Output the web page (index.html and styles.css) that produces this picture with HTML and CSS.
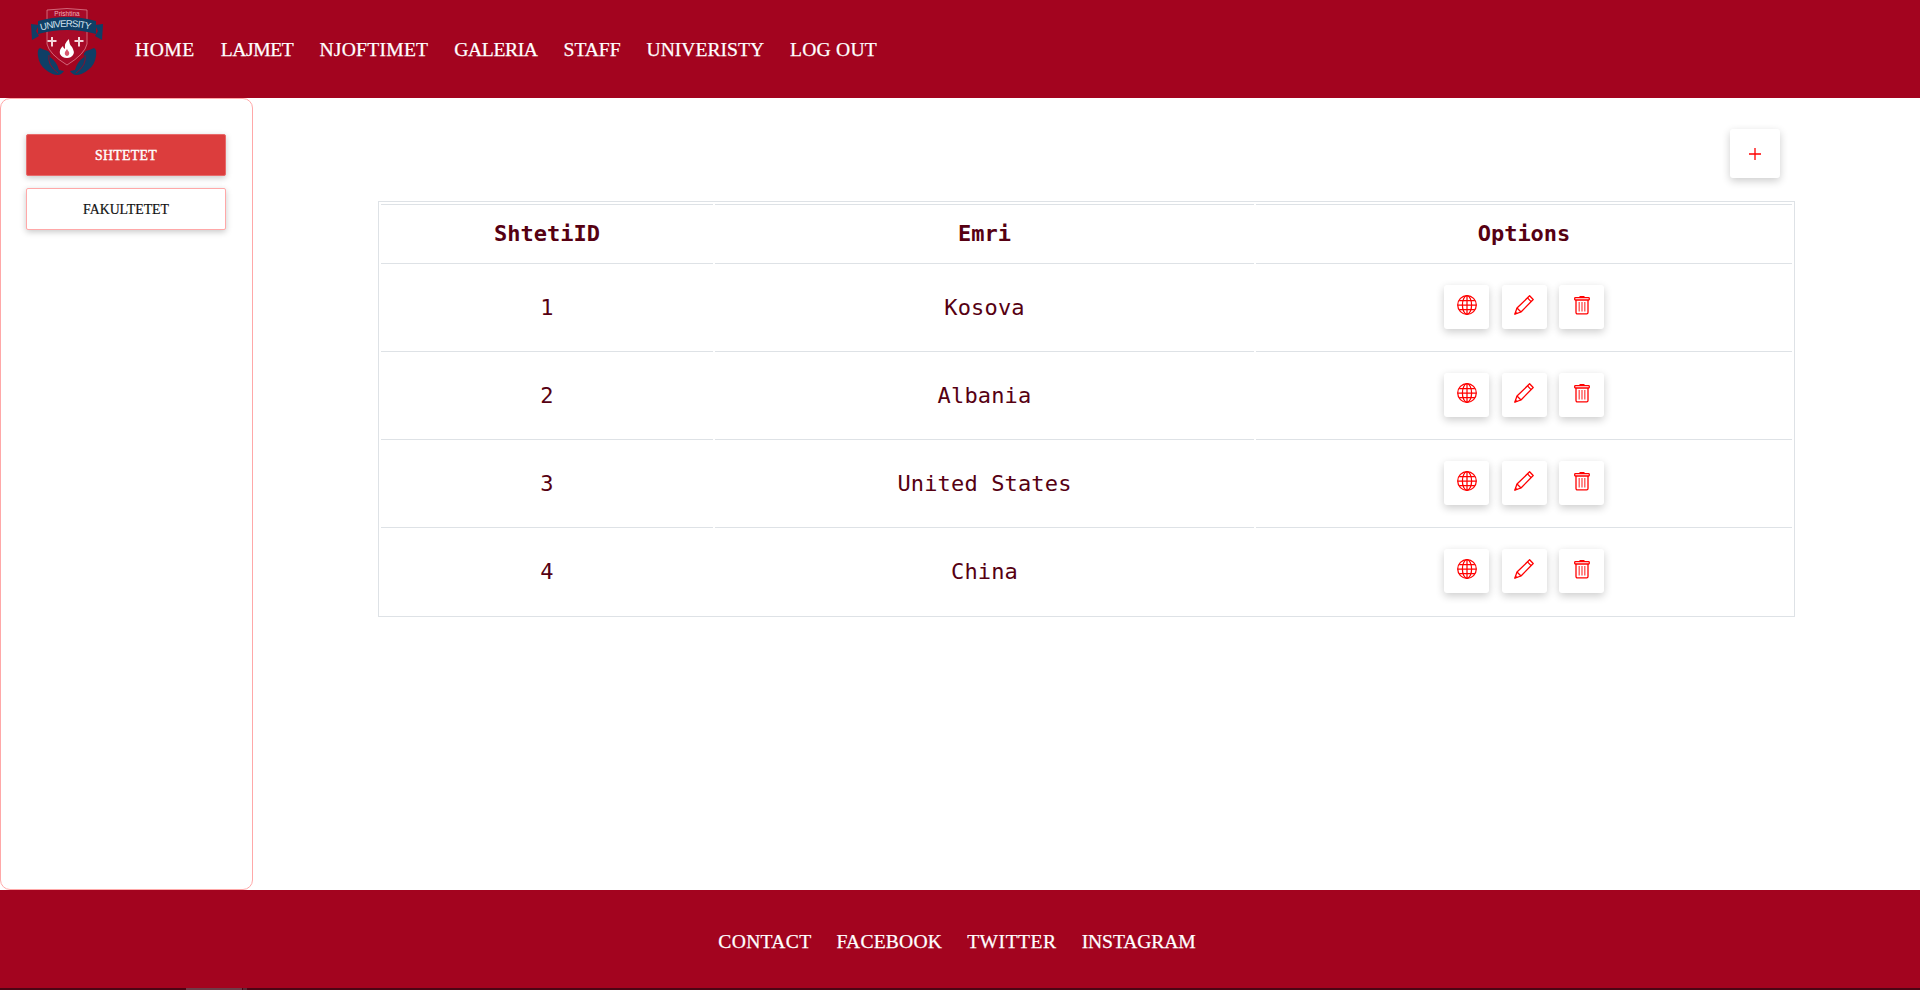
FILE: index.html
```html
<!DOCTYPE html>
<html lang="sq">
<head>
<meta charset="utf-8">
<title>University</title>
<link rel="stylesheet" href="styles.css">
</head>
<body>
<svg class="sprite" width="0" height="0" aria-hidden="true">
  <symbol id="i-globe" viewBox="0 0 20 20">
    <g fill="none" stroke="currentColor" stroke-width="1.250">
      <circle cx="10" cy="10" r="9.300"/>
      <ellipse cx="10" cy="10" rx="4.600" ry="9.300"/>
      <path d="M10 .7v18.600M.7 10h18.600M2.200 5.500h15.600M2.200 14.500h15.600"/>
    </g>
  </symbol>
  <symbol id="i-pencil" viewBox="0 0 20 20">
    <g fill="none" stroke="currentColor" stroke-width="1.300" stroke-linejoin="round">
      <path d="M.8 19.200 3 13 15.600.8l3.600 3.700L7 17z"/>
      <path d="M3 13l4 4M13.500 2.900l3.600 3.700"/>
    </g>
    <path d="M.5 19.500l.9-3.300 2.400 2.300z" fill="currentColor"/>
  </symbol>
  <symbol id="i-trash" viewBox="0 0 16 20">
    <g fill="none" stroke="currentColor" stroke-width="1.300">
      <rect x=".7" y="2.600" width="14.600" height="2.400" rx=".8"/>
      <path d="M2 5v12.500A1.300 1.300 0 0 0 3.300 18.800h9.400a1.300 1.300 0 0 0 1.300-1.300V5"/>
      <path d="M5.200 7v9.500M8 7v9.500M10.800 7v9.500" stroke-opacity=".7"/>
    </g>
    <rect x="5.500" y="1" width="5" height="1.500" fill="currentColor"/>
  </symbol>
</svg>

<header class="topbar">
  <svg class="logo" viewBox="0 0 74 68" role="img" aria-label="Prishtina University">
    <defs><path id="logo-arc" d="M11 22.500Q37 15 64 22.500"/></defs>
    <path class="logo-shield" d="M17 2q20-3 40 0v34q-2 10-20 21-18-11-20-21z"/>
    <path class="logo-wing" d="M9 17 1 16l1 16 7-4-3-5z M65 17l8-1-1 16-7-4 3-5z"/>
    <path class="logo-ribbon" d="M8 13Q37 5 66 13V26Q37 18 8 26z"/>
    <text class="logo-top" x="37" y="7.600" text-anchor="middle">Prishtina</text>
    <text class="logo-name"><textPath href="#logo-arc" textLength="50">UNIVERSITY</textPath></text>
    <path class="logo-white" d="M39 31q0 5 3 8 3 5 1 8-2 3-6 3-5 0-7-4-1-5 3-8 0 2 2 3-1-6 4-10z"/>
    <path class="logo-flame" d="M37 41q1 2 2 3 1 3-2 4-3-1-2-4z"/>
    <path class="logo-cross" d="M21 29h2v3h3.500v2H23v4.500h-2V34h-3.500v-2H21zM48 29h2v3h3.500v2H50v4.500h-2V34h-3.500v-2H48z"/>
    <path class="logo-wing" d="M10 40q-3 1-2 8 1 9 8 14 6 5 12 5 3 0 6-4l-5-1q-2-8-9-13 1-4-2-6-4-1-8-3z"/>
    <path class="logo-wing" d="M64 40q3 1 2 8-1 9-8 14-6 5-12 5-3 0-6-4l5-1q2-8 9-13-1-4 2-6 4-1 8-3z"/>
    <path class="logo-vein" d="M19 47q-2 10 9 18M55 47q2 10-9 18"/>
  </svg>
  <nav class="links">
    <a class="link link-home">HOME</a>
    <a class="link link-news">LAJMET</a>
    <a class="link link-notice">NJOFTIMET</a>
    <a class="link link-gallery">GALERIA</a>
    <a class="link link-staff">STAFF</a>
    <a class="link link-uni">UNIVERISTY</a>
    <a class="link link-out">LOG OUT</a>
  </nav>
</header>

<div class="body-row">
  <aside class="sidebar">
    <button class="side-btn side-btn-active">SHTETET</button>
    <button class="side-btn">FAKULTETET</button>
  </aside>

  <main class="content">
    <div class="toolbar">
      <button class="add-btn" aria-label="Add">
        <svg class="plus" viewBox="0 0 12 12"><path d="M6 0v12M0 6h12"/></svg>
      </button>
    </div>
    <table class="grid">
      <colgroup>
        <col class="col-id"><col class="col-name"><col class="col-opt">
      </colgroup>
      <thead>
        <tr><th>ShtetiID</th><th>Emri</th><th>Options</th></tr>
      </thead>
      <tbody>
        <tr>
          <td>1</td><td>Kosova</td>
          <td><div class="actions">
            <button class="act"><svg class="ic"><use href="#i-globe"/></svg></button>
            <button class="act"><svg class="ic"><use href="#i-pencil"/></svg></button>
            <button class="act"><svg class="ic ic-trash"><use href="#i-trash"/></svg></button>
          </div></td>
        </tr>
        <tr>
          <td>2</td><td>Albania</td>
          <td><div class="actions">
            <button class="act"><svg class="ic"><use href="#i-globe"/></svg></button>
            <button class="act"><svg class="ic"><use href="#i-pencil"/></svg></button>
            <button class="act"><svg class="ic ic-trash"><use href="#i-trash"/></svg></button>
          </div></td>
        </tr>
        <tr>
          <td>3</td><td>United States</td>
          <td><div class="actions">
            <button class="act"><svg class="ic"><use href="#i-globe"/></svg></button>
            <button class="act"><svg class="ic"><use href="#i-pencil"/></svg></button>
            <button class="act"><svg class="ic ic-trash"><use href="#i-trash"/></svg></button>
          </div></td>
        </tr>
        <tr>
          <td>4</td><td>China</td>
          <td><div class="actions">
            <button class="act"><svg class="ic"><use href="#i-globe"/></svg></button>
            <button class="act"><svg class="ic"><use href="#i-pencil"/></svg></button>
            <button class="act"><svg class="ic ic-trash"><use href="#i-trash"/></svg></button>
          </div></td>
        </tr>
      </tbody>
    </table>
  </main>
</div>

<footer class="footer">
  <nav class="footer-links">
    <a class="link link-contact">CONTACT</a>
    <a class="link link-fb">FACEBOOK</a>
    <a class="link link-tw">TWITTER</a>
    <a class="link link-ig">INSTAGRAM</a>
  </nav>
</footer>
<div class="scrollbar"><span class="thumb"></span><span class="thumb-end"></span></div>
</body>
</html>
```
FILE: styles.css
```css
* { box-sizing: border-box; }
html, body { margin: 0; padding: 0; height: 990px; overflow: hidden; background: #fff; }
body { display: flex; flex-direction: column; font-family: "Liberation Serif", serif; }
.sprite { position: absolute; }

.topbar { height: 98px; flex: none; display: flex; align-items: center; background: #a3041f; padding: 2px 0 0 30px; }
.logo { width: 74px; height: 68px; align-self: flex-start; margin-top: 6px; flex: none; }
.logo-shield { fill: #a80a28; stroke: #dc7f8e; stroke-width: .8; }
.logo-ribbon, .logo-wing { fill: #0f3f66; }
.logo-top { font: 6.500px "Liberation Sans", sans-serif; fill: #eeb0ba; }
.logo-name { font: 9.500px "Liberation Sans", sans-serif; fill: #d5e3ee; }
.logo-white { fill: #fff; }
.logo-flame { fill: #d8586e; }
.logo-cross { fill: #f3d5da; }
.logo-vein { fill: none; stroke: #a3041f; stroke-width: .8; }

.links { display: flex; gap: 26px; margin-left: 31px; }
.link { color: #fff; font-size: 19.600px; line-height: 24px; white-space: nowrap; -webkit-text-stroke: .25px #fff; }
.link-home { letter-spacing: .5px; }
.link-news { letter-spacing: -.4px; }
.link-notice { letter-spacing: .25px; }
.link-gallery { letter-spacing: -.4px; }
.link-staff { letter-spacing: -.05px; }
.link-uni { letter-spacing: 0; }
.link-out { letter-spacing: .2px; }
.link-contact { letter-spacing: .3px; }
.link-fb { letter-spacing: .2px; }
.link-tw { letter-spacing: .5px; }
.link-ig { letter-spacing: -.1px; }

.body-row { flex: 1; display: flex; min-height: 0; }
.sidebar { width: 253px; flex: none; border: 1px solid #ffa8a8; border-radius: 10px; padding: 35px 26px 0 25px; display: flex; flex-direction: column; gap: 12px; }
.side-btn { height: 42px; padding: 2px 0 0; background: #fff; color: #111; border: 1px solid #ffa8a8; border-radius: 2px; font: 13.800px "Liberation Serif", serif; -webkit-text-stroke: .2px #111; box-shadow: 0 2px 6px rgba(0, 0, 0, .22); }
.side-btn-active { background: #dc3d3d; color: #fff; -webkit-text-stroke: .4px #fff; letter-spacing: .3px; border-color: #e86a6a; }

.content { flex: 1; min-width: 0; padding: 31px 125px 0 125px; display: flex; flex-direction: column; }
.toolbar { display: flex; justify-content: flex-end; padding-right: 15px; height: 72px; }
.add-btn { width: 50px; height: 49px; padding: 0; border: 0; border-radius: 3px; background: #fff; box-shadow: 0 3px 9px rgba(0, 0, 0, .2); display: flex; align-items: center; justify-content: center; }
.plus { width: 12px; height: 12px; fill: none; stroke: #f00; stroke-width: 1.300; }

.grid { width: 1417px; table-layout: fixed; border: 1px solid #dee2e6; border-collapse: separate; border-spacing: 2px; font-family: "DejaVu Sans Mono", monospace; color: #560012; }
.col-id { width: 332px; }
.col-name { width: 539px; }
.grid th, .grid td { border-top: 1px solid #dee2e6; text-align: center; padding: 0; }
.grid th { height: 57px; font-size: 22px; font-weight: bold; }
.grid td { height: 86px; font-size: 22px; padding-top: 2px; letter-spacing: .15px; }
.grid tbody tr:last-child td { height: 87px; padding-bottom: 1px; }

.actions { display: flex; justify-content: center; gap: 12.500px; padding: 0 0 2px; }
.act { width: 45px; height: 44px; padding: 10px 0 0; border: 0; border-radius: 3px; background: #fff; color: #f00; box-shadow: 0 3px 8px rgba(0, 0, 0, .2); display: flex; justify-content: center; }
.ic { width: 20px; height: 20px; }
.ic-trash { width: 16px; }

.footer { height: 98px; flex: none; background: #a3041f; display: flex; align-items: center; justify-content: center; padding: 5px 6px 0 0; }
.footer-links { display: flex; gap: 25px; }

.scrollbar { height: 2px; flex: none; background: #4c0514; display: flex; padding-left: 186px; }
.thumb { width: 56px; background: #6e3c48; }
.thumb-end { width: 4px; margin-left: 1px; background: #5c2a36; }
```
